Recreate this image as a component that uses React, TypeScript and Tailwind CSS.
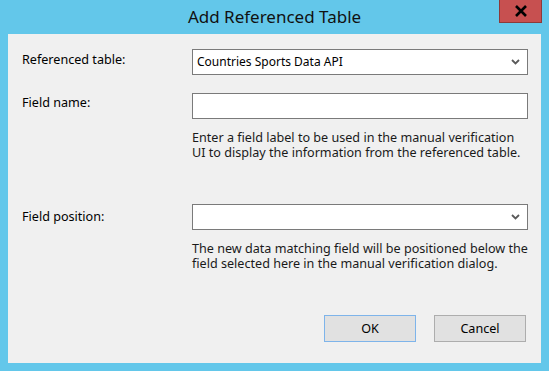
const Chevron = () => (
  <svg width="9" height="6" viewBox="0 0 9 6" className="shrink-0">
    <polyline points="1,1 4.5,4.5 8,1" fill="none" stroke="#5a5a5a" strokeWidth="1.8" />
  </svg>
);

const Combo = ({ value }: { value?: string }) => (
  <div className="w-[336px] h-[26px] bg-white border border-[#7a7a7a] flex items-center pl-[4px] pr-[7px]">
    <span className="flex-1 truncate text-[12px]">{value}</span>
    <Chevron />
  </div>
);

const App = () => {
  return (
    <div className="w-[549px] h-[371px] bg-[#63c7ea] flex flex-col font-['Noto_Sans',sans-serif] text-black overflow-hidden">
      {/* Title bar */}
      <div className="h-[34px] shrink-0 grid grid-cols-[1fr_auto_1fr]">
        <div />
        <div className="pt-[5px] text-[17px] leading-[24px] text-[#111]">Add Referenced Table</div>
        <div className="flex justify-end items-start pr-[7px]">
          <button className="w-[43px] h-[23px] bg-[#c75050] border border-t-0 border-[#8c3a3a] flex items-center justify-center">
            <svg width="14" height="12" viewBox="0 0 14 12">
              <path d="M2 1 L12 11 M12 1 L2 11" stroke="#000" strokeWidth="2.6" />
            </svg>
          </button>
        </div>
      </div>

      {/* Client area */}
      <div className="mx-[8px] h-[329px] bg-[#f0f0f0] pl-[14px] pr-[13px] pt-[15px] flex flex-col text-[12.6px] leading-[16px]">
        <div className="flex">
          <div className="w-[170px] pt-[3px]">Referenced table:</div>
          <Combo value="Countries Sports Data API" />
        </div>

        <div className="flex mt-[18px]">
          <div className="w-[170px] pt-[2px]">Field name:</div>
          <div className="w-[336px] h-[26px] bg-white border border-[#7a7a7a]" />
        </div>

        <div className="ml-[170px] mt-[10px] leading-[17px] text-[#1a1a1a] whitespace-nowrap">
          <div>Enter a field label to be used in the manual verification</div>
          <div className="-mt-[2px]">UI to display the information from the referenced table.</div>
        </div>

        <div className="flex mt-[43px]">
          <div className="w-[170px] pt-[5px]">Field position:</div>
          <Combo />
        </div>

        <div className="ml-[170px] mt-[10px] leading-[17px] text-[#1a1a1a] whitespace-nowrap">
          <div>The new data matching field will be positioned below the</div>
          <div className="-mt-[2px]">field selected here in the manual verification dialog.</div>
        </div>

        <div className="mt-auto mb-[21px] flex justify-end gap-[18px] pr-[2px]">
          <button className="w-[92px] h-[27px] bg-[#e1e1e1] border border-[#7eb4ea] text-[12.6px]">OK</button>
          <button className="w-[92px] h-[27px] bg-[#e1e1e1] border border-[#adadad] text-[12.6px]">Cancel</button>
        </div>
      </div>
    </div>
  );
};

export default App;
